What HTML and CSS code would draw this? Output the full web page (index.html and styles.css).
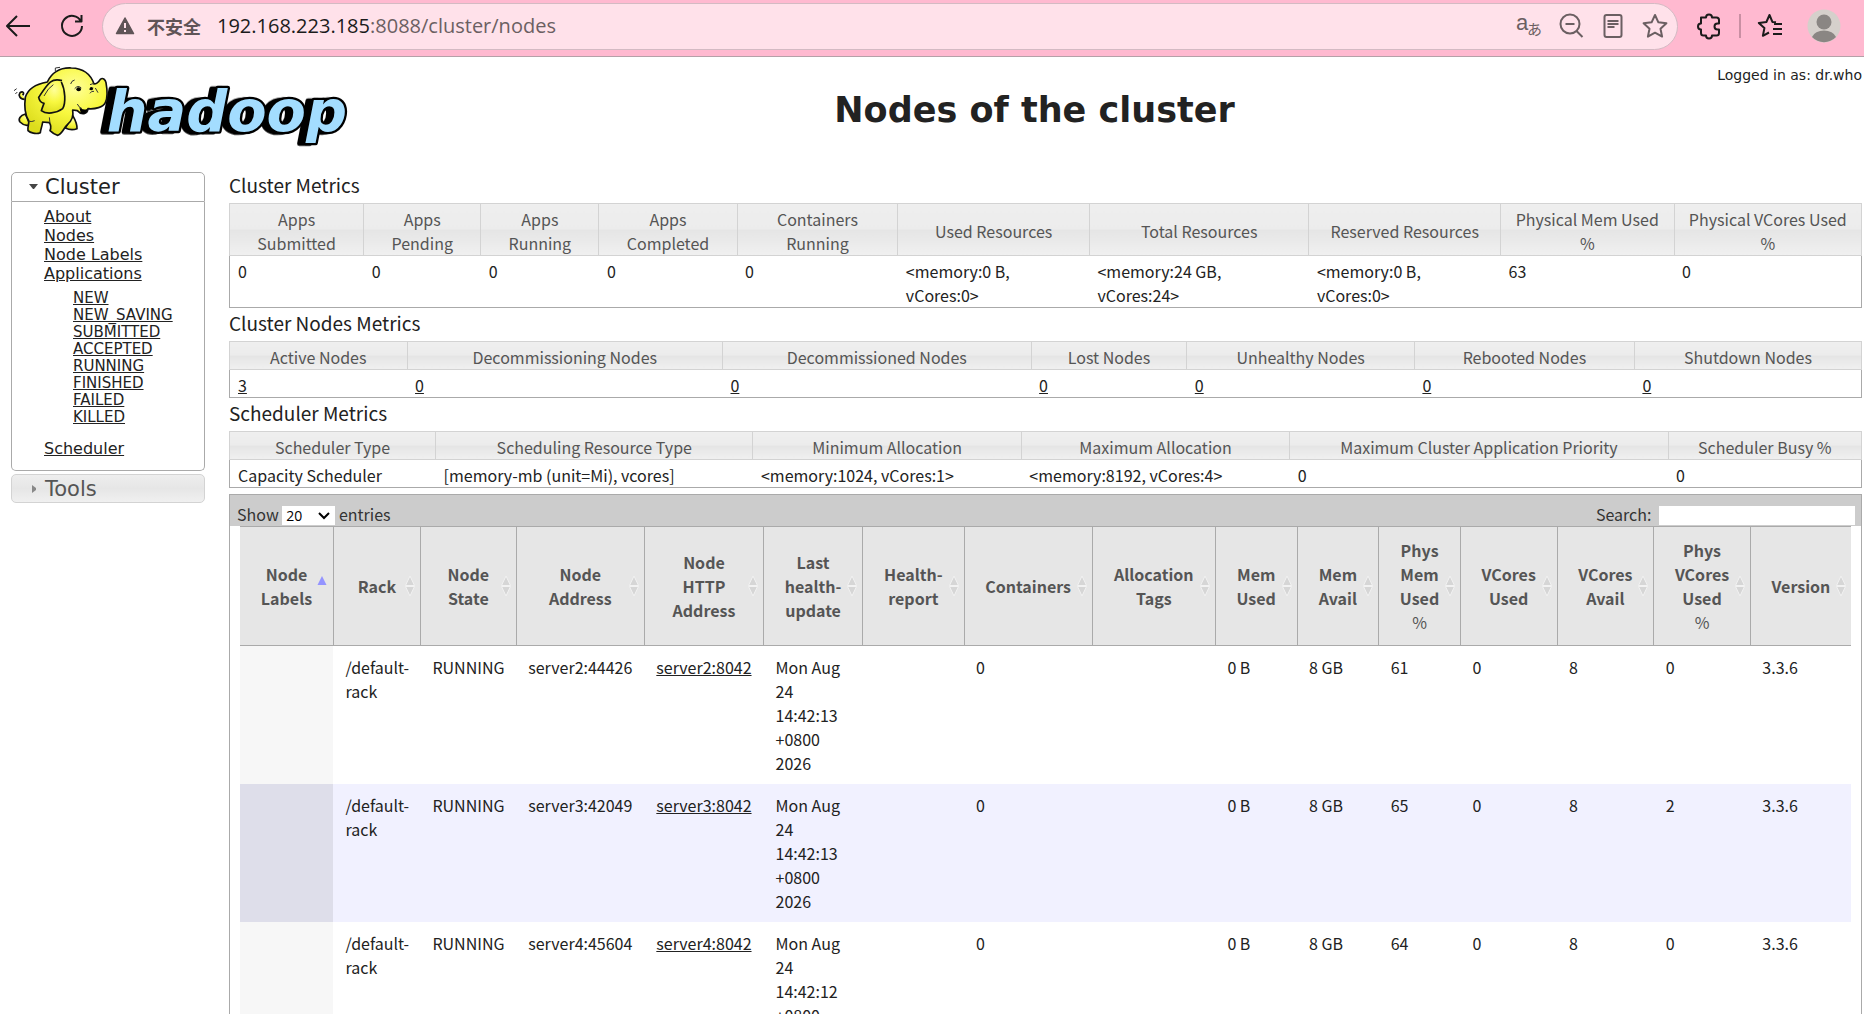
FILE: index.html
```html
<!DOCTYPE html>
<html lang="zh-CN">
<head>
    <meta charset="UTF-8">
    <meta name="viewport" content="width=device-width, initial-scale=1.0">
    <title>Nodes of the cluster</title>
    <link rel="stylesheet" href="styles.css">
</head>
<body>
    <!-- browser toolbar -->
    <div class="toolbar">
        <button class="icon-btn" aria-label="Back">
            <svg width="26" height="26" viewBox="0 0 26 26"><path d="M25 13H2M12 3L2 13l10 10"/></svg>
        </button>
        <button class="icon-btn reload" aria-label="Reload">
            <svg width="26" height="26" viewBox="0 0 26 26"><path d="M22 8.500A10 10 0 1 0 23 13M22.500 2v6.500H16"/></svg>
        </button>
        <div class="address">
            <svg class="warn" width="20" height="20" viewBox="0 0 20 20"><path d="M10 2L18.500 17.500H1.500Z" fill="#5f5457" stroke="#5f5457" stroke-width="1.500" stroke-linejoin="round"/><path d="M10 7v5M10 14v2" stroke="#ffe1ea" stroke-width="2" fill="none"/></svg>
            <span class="insecure">不安全</span>
            <span class="url"><b>192.168.223.185</b>:8088/cluster/nodes</span>
            <button class="icon-btn" aria-label="Translate">
                <svg width="26" height="26" viewBox="0 0 26 26"><text class="tr-a" x="0" y="17">a</text><text class="tr-b" x="11" y="22">あ</text></svg>
            </button>
            <button class="icon-btn" aria-label="Zoom out">
                <svg width="26" height="26" viewBox="0 0 26 26"><circle cx="12" cy="11" r="9.500"/><path d="M18.500 18l6 6M7.500 11h9"/></svg>
            </button>
            <button class="icon-btn" aria-label="Reader">
                <svg width="26" height="26" viewBox="0 0 26 26"><rect x="4.500" y="2" width="17" height="22" rx="2"/><path d="M7.500 8h11M7.500 11h11M7.500 14h7"/></svg>
            </button>
            <button class="icon-btn" aria-label="Favorite">
                <svg width="26" height="26" viewBox="0 0 26 26"><path d="M13 2l3.400 7.300 8 1-5.900 5.400 1.600 7.900L13 19.700l-7.100 3.900 1.600-7.900L1.600 10.300l8-1z"/></svg>
            </button>
        </div>
        <button class="icon-btn extensions" aria-label="Extensions">
            <svg width="26" height="26" viewBox="0 0 26 26"><path d="M5 4.500h5a3 3 0 0 1 6 0h4.500a2.500 2.500 0 0 1 2.500 2.500v3.500h-1.500a3 3 0 0 0 0 6H23V20a2.500 2.500 0 0 1-2.500 2.500H16a3 3 0 0 1-6 0H7.500A2.500 2.500 0 0 1 5 20v-3.500a3 3 0 0 1 0-6z"/></svg>
        </button>
        <span class="divider"></span>
        <button class="icon-btn" aria-label="Favorites">
            <svg width="26" height="26" viewBox="0 0 26 26"><path d="M19 9.300l-3.600-.400L12.500 2 9.400 9l-7.600.900 5.600 5.200-1.500 7.700L12 19.500M17 11h8M16 16h9M16 21h9"/></svg>
        </button>
        <button class="icon-btn avatar" aria-label="Profile">
            <svg width="34" height="34" viewBox="0 0 34 34"><circle cx="17" cy="17" r="16.500" fill="#d5d0cb"/><circle cx="17" cy="13" r="7.500" fill="#8a8683"/><path d="M5 28a12.500 9 0 0 1 24 0 16.500 16.500 0 0 1-24 0z" fill="#8a8683"/></svg>
        </button>
    </div>

    <div class="page">
        <header class="header">
            <a class="logo" href="#" aria-label="hadoop">
                <svg width="360" height="93" viewBox="0 6 1080 279">
                    <defs>
                        <radialGradient id="skin" cx="60%" cy="30%" r="75%">
                            <stop offset="0" stop-color="#ffff9a"/>
                            <stop offset=".5" stop-color="#f8f840"/>
                            <stop offset="1" stop-color="#dcdc1c"/>
                        </radialGradient>
                    </defs>
                    <text class="word" x="320" y="229">hadoop</text>
                    <g transform="translate(24 15)">
                        <path class="skin" d="M50 118C36 118 30 106 36 98C44 92 50 98 44 106"/>
                        <path class="skin" d="M52 162C36 166 30 178 36 186C44 194 56 198 66 194Z"/>
                        <path class="skin" d="M194 166C202 180 208 192 207 206C195 211 180 208 172 204Z"/>
                        <path class="skin" d="M52 112C60 85 85 72 118 66C130 40 155 22 190 24C225 25 248 42 258 72C266 72 272 66 277 58C284 52 292 58 294 68C298 90 300 112 292 128C285 142 262 148 240 146C238 164 220 166 208 152L194 150C198 172 190 184 178 194C166 204 164 222 148 226C138 222 132 218 126 212C130 202 130 196 124 188L104 186C102 200 98 208 97 218C84 224 66 218 60 212C58 200 64 190 62 182C52 165 48 140 52 112Z"/>
                        <path class="skin" d="M162 62C130 52 120 70 92 112C94 122 98 128 108 130C104 140 102 146 100 152C115 164 145 160 164 146C174 130 172 90 160 66"/>
                        <path class="line" d="M188 72Q190 62 200 60M200 86Q210 74 220 84M246 74L258 70M244 88L256 84M246 100Q250 92 258 94M262 84L270 98M208 132Q212 142 222 146M136 74Q120 84 108 108M126 190L124 172M62 184Q72 186 80 182M18 92L26 86M22 102L28 96M142 34L142 24L156 22"/>
                        <path d="M214 142C222 150 232 150 238 146C238 160 226 166 218 158Z"/>
                        <ellipse cx="212" cy="88" rx="7" ry="6"/>
                        <ellipse cx="250" cy="86" rx="5" ry="5"/>
                    </g>
                </svg>
            </a>
            <div class="banner">
                <div class="user">Logged in as: dr.who</div>
                <h1>Nodes of the cluster</h1>
            </div>
        </header>

        <div class="columns">
            <nav class="sidebar">
                <h3 class="open"><svg width="10" height="6" viewBox="0 0 10 6"><path d="M0 0h9L5 5H4z" fill="#454545"/></svg>Cluster</h3>
                <div class="panel">
                    <ul>
                        <li><a href="#">About</a></li>
                        <li><a href="#">Nodes</a></li>
                        <li><a href="#">Node Labels</a></li>
                        <li><a href="#">Applications</a>
                            <ul>
                                <li><a href="#">NEW</a></li>
                                <li><a href="#">NEW_SAVING</a></li>
                                <li><a href="#">SUBMITTED</a></li>
                                <li><a href="#">ACCEPTED</a></li>
                                <li><a href="#">RUNNING</a></li>
                                <li><a href="#">FINISHED</a></li>
                                <li><a href="#">FAILED</a></li>
                                <li><a href="#">KILLED</a></li>
                            </ul>
                        </li>
                        <li><a href="#">Scheduler</a></li>
                    </ul>
                </div>
                <h3 class="closed"><svg width="10" height="10" viewBox="0 0 10 10"><path d="M3 1v8l4-3V4z" fill="#888"/></svg>Tools</h3>
            </nav>

            <main class="content">
                <h2>Cluster Metrics</h2>
                <table class="metrics">
                    <thead>
                        <tr>
                            <th>Apps Submitted</th>
                            <th>Apps Pending</th>
                            <th>Apps Running</th>
                            <th>Apps Completed</th>
                            <th>Containers Running</th>
                            <th>Used Resources</th>
                            <th>Total Resources</th>
                            <th>Reserved Resources</th>
                            <th>Physical Mem Used %</th>
                            <th>Physical VCores Used %</th>
                        </tr>
                    </thead>
                    <tbody>
                        <tr>
                            <td>0</td>
                            <td>0</td>
                            <td>0</td>
                            <td>0</td>
                            <td>0</td>
                            <td>&lt;memory:0 B, vCores:0&gt;</td>
                            <td>&lt;memory:24 GB, vCores:24&gt;</td>
                            <td>&lt;memory:0 B, vCores:0&gt;</td>
                            <td>63</td>
                            <td>0</td>
                        </tr>
                    </tbody>
                </table>

                <h2>Cluster Nodes Metrics</h2>
                <table class="metrics">
                    <thead>
                        <tr>
                            <th>Active Nodes</th>
                            <th>Decommissioning Nodes</th>
                            <th>Decommissioned Nodes</th>
                            <th>Lost Nodes</th>
                            <th>Unhealthy Nodes</th>
                            <th>Rebooted Nodes</th>
                            <th>Shutdown Nodes</th>
                        </tr>
                    </thead>
                    <tbody>
                        <tr>
                            <td><a href="#">3</a></td>
                            <td><a href="#">0</a></td>
                            <td><a href="#">0</a></td>
                            <td><a href="#">0</a></td>
                            <td><a href="#">0</a></td>
                            <td><a href="#">0</a></td>
                            <td><a href="#">0</a></td>
                        </tr>
                    </tbody>
                </table>

                <h2>Scheduler Metrics</h2>
                <table class="metrics">
                    <thead>
                        <tr>
                            <th>Scheduler Type</th>
                            <th>Scheduling Resource Type</th>
                            <th>Minimum Allocation</th>
                            <th>Maximum Allocation</th>
                            <th>Maximum Cluster Application Priority</th>
                            <th>Scheduler Busy %</th>
                        </tr>
                    </thead>
                    <tbody>
                        <tr>
                            <td>Capacity Scheduler</td>
                            <td>[memory-mb (unit=Mi), vcores]</td>
                            <td>&lt;memory:1024, vCores:1&gt;</td>
                            <td>&lt;memory:8192, vCores:4&gt;</td>
                            <td>0</td>
                            <td>0</td>
                        </tr>
                    </tbody>
                </table>

                <div class="nodes-wrapper">
                    <div class="nodes-bar">
                        <label>Show <select><option>20</option><option>50</option><option>100</option></select> entries</label>
                        <label class="search">Search: <input type="text"></label>
                    </div>
                    <table class="nodes">
                        <colgroup>
                            <col class="labels">
                            <col class="rack">
                            <col class="state">
                            <col class="node-address">
                            <col class="http">
                            <col class="update">
                            <col class="report">
                            <col class="containers">
                            <col class="tags">
                            <col class="mem" span="3">
                            <col class="vcores" span="3">
                            <col class="version">
                        </colgroup>
                        <thead>
                            <tr>
                                <th class="asc">Node Labels</th>
                                <th>Rack</th>
                                <th>Node State</th>
                                <th>Node Address</th>
                                <th>Node HTTP Address</th>
                                <th>Last health-update</th>
                                <th>Health-report</th>
                                <th>Containers</th>
                                <th>Allocation Tags</th>
                                <th>Mem Used</th>
                                <th>Mem Avail</th>
                                <th>Phys Mem Used <span>%</span></th>
                                <th>VCores Used</th>
                                <th>VCores Avail</th>
                                <th>Phys VCores Used <span>%</span></th>
                                <th>Version</th>
                            </tr>
                        </thead>
                        <tbody>
                            <tr>
                                <td></td>
                                <td>/default-rack</td>
                                <td>RUNNING</td>
                                <td>server2:44426</td>
                                <td><a href="#">server2:8042</a></td>
                                <td>Mon Aug 24 14:42:13 +0800 2026</td>
                                <td></td>
                                <td>0</td>
                                <td></td>
                                <td>0 B</td>
                                <td>8 GB</td>
                                <td>61</td>
                                <td>0</td>
                                <td>8</td>
                                <td>0</td>
                                <td>3.3.6</td>
                            </tr>
                            <tr>
                                <td></td>
                                <td>/default-rack</td>
                                <td>RUNNING</td>
                                <td>server3:42049</td>
                                <td><a href="#">server3:8042</a></td>
                                <td>Mon Aug 24 14:42:13 +0800 2026</td>
                                <td></td>
                                <td>0</td>
                                <td></td>
                                <td>0 B</td>
                                <td>8 GB</td>
                                <td>65</td>
                                <td>0</td>
                                <td>8</td>
                                <td>2</td>
                                <td>3.3.6</td>
                            </tr>
                            <tr>
                                <td></td>
                                <td>/default-rack</td>
                                <td>RUNNING</td>
                                <td>server4:45604</td>
                                <td><a href="#">server4:8042</a></td>
                                <td>Mon Aug 24 14:42:12 +0800 2026</td>
                                <td></td>
                                <td>0</td>
                                <td></td>
                                <td>0 B</td>
                                <td>8 GB</td>
                                <td>64</td>
                                <td>0</td>
                                <td>8</td>
                                <td>0</td>
                                <td>3.3.6</td>
                            </tr>
                        </tbody>
                    </table>
                </div>
            </main>
        </div>
    </div>
</body>
</html>
```

FILE: styles.css
```css
* {
    box-sizing: border-box;
}

body {
    margin: 0;
    height: 100vh;
    overflow: hidden;
    background: #fff;
    color: #222;
    font-family: "Noto Sans CJK SC", sans-serif;
    font-size: 16px;
    line-height: 24px;
}

a {
    color: #222;
}

/* browser toolbar */
.toolbar {
    display: flex;
    align-items: center;
    height: 57px;
    padding: 0 23px 4px 5px;
    background: #ffb9d0;
    border-bottom: 1px solid #b5a0a8;
}

.icon-btn {
    display: flex;
    padding: 0;
    border: 0;
    background: none;
    cursor: pointer;
}

.icon-btn svg {
    overflow: visible;
    fill: none;
    stroke: #1b1b1b;
    stroke-width: 2;
    stroke-linejoin: round;
}

.avatar svg {
    stroke: none;
}

.reload {
    margin: 0 17px 0 28px;
}

.address {
    flex: 1;
    display: flex;
    align-items: center;
    gap: 16px;
    height: 47px;
    padding: 0 9px 0 12px;
    background: #ffe1ea;
    border: 1px solid #d3bac3;
    border-radius: 24px;
}

.address .icon-btn svg {
    stroke: #6b5f62;
}

.address .icon-btn text {
    fill: #6b5f62;
    stroke: none;
}

.tr-a {
    font-size: 22px;
}

.tr-b {
    font-size: 15px;
}

.warn {
    margin-right: -4px;
}

.insecure {
    color: #5f5457;
    font-size: 18px;
    font-weight: bold;
}

.url {
    flex: 1;
    color: #6b5f62;
    font-family: "Open Sans", sans-serif;
    font-size: 20px;
}

.url b {
    color: #1b1b1b;
    font-weight: normal;
}

.extensions {
    margin-left: 18px;
}

.divider {
    width: 2px;
    height: 24px;
    margin: 0 16px 0 17px;
    background: #c98fa3;
}

.avatar {
    margin-left: 24px;
}

/* header */
.header {
    display: grid;
    grid-template-columns: 205px 1fr;
    height: 113px;
    font-family: "DejaVu Sans", sans-serif;
}

.word {
    fill: #a3ddff;
    stroke: #000;
    stroke-width: 14px;
    stroke-linejoin: round;
    paint-order: stroke;
    font-family: "DejaVu Sans", sans-serif;
    font-size: 172px;
    font-weight: bold;
    font-style: italic;
    filter: drop-shadow(-18px 2px 0 #000);
}

.skin {
    fill: url(#skin);
    stroke: #111;
    stroke-width: 5px;
    stroke-linejoin: round;
}

.line {
    fill: none;
    stroke: #333;
    stroke-width: 3px;
}

.user {
    padding: 6px 2px 0 0;
    font-size: 14px;
    text-align: right;
}

h1 {
    margin: 0;
    font-size: 35px;
    line-height: 46px;
    text-align: center;
}

.columns {
    display: grid;
    grid-template-columns: 194px minmax(0, 1fr);
    gap: 24px;
    padding: 0 2px 0 11px;
}

/* accordion menu */
.sidebar {
    padding-top: 2px;
    font-family: "DejaVu Sans", sans-serif;
}

.sidebar h3 {
    display: flex;
    align-items: center;
    gap: 6px;
    height: 30px;
    margin: 0;
    padding-left: 17px;
    border: 1px solid #aaa;
    font-size: 21px;
    font-weight: normal;
}

.sidebar .open {
    border-radius: 5px 5px 0 0;
}

.sidebar .closed {
    height: 29px;
    margin-top: 3px;
    border-color: #d3d3d3;
    border-radius: 5px;
    background: linear-gradient(#eee, #e6e6e6 50%, #f0f0f0);
    color: #555;
}

.panel {
    padding: 5px 0 12px 32px;
    border: 1px solid #aaa;
    border-top: 0;
    border-radius: 0 0 5px 5px;
    line-height: 19px;
}

.panel ul {
    margin: 0;
    padding: 0;
    list-style: none;
}

.panel ul ul {
    margin: 7px 0 13px;
    padding-left: 29px;
    font-size: 15px;
    line-height: 17px;
}

/* metrics tables */
h2 {
    margin: 0;
    padding-bottom: 3px;
    font-size: 19px;
    font-weight: normal;
    line-height: 30px;
}

table {
    width: 100%;
    border-collapse: collapse;
}

.metrics {
    border: 1px solid #aaa;
}

.metrics th {
    padding: 3px 8px 0;
    border: 1px solid #d3d3d3;
    background: linear-gradient(#eee, #ececec 50%, #e5e5e5 50%, #f0f0f0);
    color: #555;
    font-weight: normal;
}

.metrics td {
    padding: 3px 8px 0;
    vertical-align: top;
}

/* nodes table */
.nodes-wrapper {
    margin-top: 6px;
    border: 1px solid #aaa;
}

.nodes-bar {
    display: flex;
    align-items: flex-end;
    justify-content: space-between;
    height: 31px;
    padding: 0 6px 0 7px;
    background: #ccc;
    color: #333;
}

.nodes-bar select,
.nodes-bar input {
    height: 19px;
    padding: 0 4px;
    border: 0;
    border-radius: 0;
    background: #fff;
    color: #000;
    font-family: "Open Sans", sans-serif;
    font-size: 14px;
    line-height: 19px;
}

.nodes-bar select {
    width: 53px;
    appearance: none;
    background: #fff url("data:image/svg+xml,%3Csvg xmlns='http://www.w3.org/2000/svg' width='12' height='8'%3E%3Cpath d='M1 1l5 5 5-5' fill='none' stroke='%23000' stroke-width='2'/%3E%3C/svg%3E") no-repeat right 5px center;
}

.nodes-bar input {
    width: 196px;
    margin-left: 4px;
}

.nodes {
    width: calc(100% - 20px);
    margin: 0 10px;
    table-layout: fixed;
}

.labels {
    width: 5.8%;
}

.rack {
    width: 5.4%;
}

.state {
    width: 5.95%;
}

.node-address {
    width: 7.95%;
}

.http {
    width: 7.4%;
}

.update {
    width: 6.15%;
}

.report {
    width: 6.3%;
}

.containers {
    width: 7.95%;
}

.tags {
    width: 7.65%;
}

.mem {
    width: 5.07%;
}

.vcores {
    width: 6%;
}

.nodes th {
    padding: 11px 17px;
    border: 1px solid #aaa;
    border-width: 1px 0 1px 1px;
    background: #e6e6e6 url("data:image/svg+xml,%3Csvg xmlns='http://www.w3.org/2000/svg' width='12' height='22'%3E%3Cpath d='M6 1l4.500 9.500h-9zM6 21l4.500-9.500h-9z' fill='%23d6d6d6' stroke='%23f2f2f2'/%3E%3C/svg%3E") no-repeat right 4px center;
    color: #555;
}

.nodes th.asc {
    border-left: 0;
    background-image: url("data:image/svg+xml,%3Csvg xmlns='http://www.w3.org/2000/svg' width='12' height='22'%3E%3Cpath d='M5 1l4.500 9h-9z' fill='%239494ff'/%3E%3C/svg%3E");
}

.nodes th span {
    display: block;
    font-weight: normal;
}

.nodes td {
    padding: 9px 8px 9px 12px;
    vertical-align: top;
}

.nodes td:first-child {
    background: #f7f7f7;
}

.nodes tr:nth-child(even) td {
    background: #f1f1ff;
}

.nodes tr:nth-child(even) td:first-child {
    background: #dedeea;
}
```
